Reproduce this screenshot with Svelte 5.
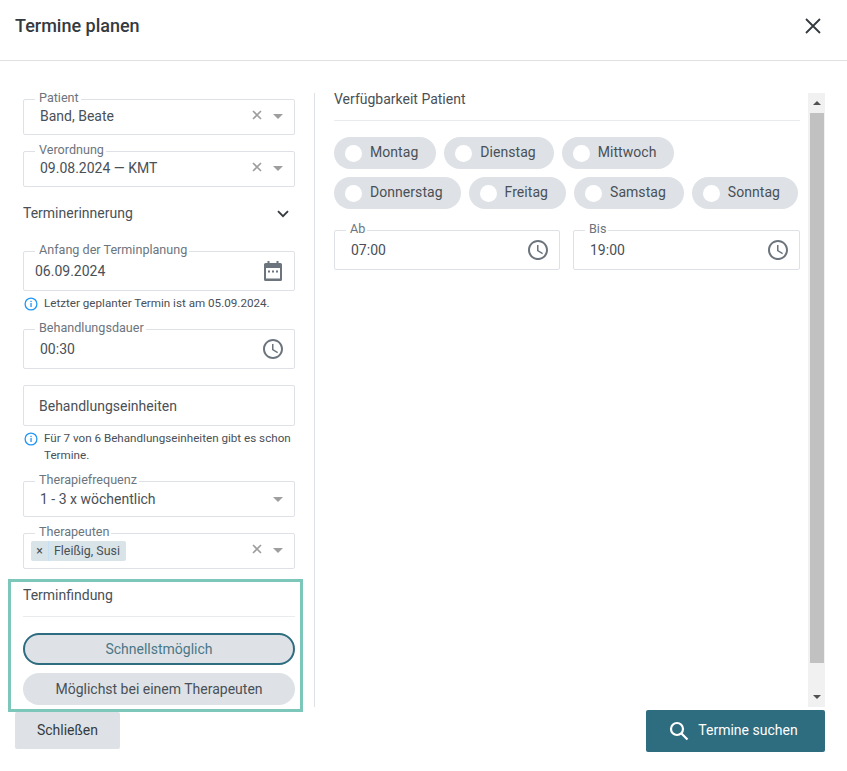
<script>
  const clock =
    "M11.99 2C6.47 2 2 6.48 2 12s4.47 10 9.99 10C17.52 22 22 17.52 22 12S17.52 2 11.99 2zM12 20c-4.42 0-8-3.58-8-8s3.58-8 8-8 8 3.58 8 8-3.58 8-8 8zm.5-13H11v6l5.25 3.15.75-1.23-4.5-2.67z";
  const days1 = ["Montag", "Dienstag", "Mittwoch"];
  const days2 = ["Donnerstag", "Freitag", "Samstag", "Sonntag"];
</script>

{#snippet clockIcon()}
  <svg class="ico" viewBox="0 0 24 24" width="24" height="24"><path d={clock} /></svg>
{/snippet}

{#snippet selectTools(clearable)}
  <span class="tools">
    {#if clearable}
      <svg class="clear" viewBox="0 0 10 10" width="10" height="10"><path d="M1 1l8 8M9 1l-8 8" /></svg>
    {/if}
    <span class="caret"></span>
  </span>
{/snippet}

{#snippet chip(day)}
  <button class="day"><span class="knob"></span>{day}</button>
{/snippet}

{#snippet info(text)}
  <div class="info">
    <svg viewBox="0 0 14 14" width="14" height="14">
      <circle cx="7" cy="7" r="5.9" fill="none" stroke="#2196f3" stroke-width="1.3" />
      <rect x="6.4" y="6" width="1.3" height="4" fill="#2196f3" />
      <rect x="6.4" y="3.8" width="1.3" height="1.3" fill="#2196f3" />
    </svg>
    <span>{text}</span>
  </div>
{/snippet}

<div class="dialog">
  <header>
    <h2>Termine planen</h2>
    <button class="close" aria-label="Schließen">
      <svg viewBox="0 0 16 16" width="16" height="16"><path d="M1 1l14 14M15 1L1 15" /></svg>
    </button>
  </header>

  <div class="body">
    <aside class="left">
      <div class="field sel">
        <label>Patient</label>
        <span class="val">Band, Beate</span>
        {@render selectTools(true)}
      </div>
      <div class="field sel gap">
        <label>Verordnung</label>
        <span class="val">09.08.2024 — KMT</span>
        {@render selectTools(true)}
      </div>
      <div class="reminder">
        <span>Terminerinnerung</span>
        <svg viewBox="0 0 12 8" width="12" height="8"><path d="M1 1.2l5 5 5-5" /></svg>
      </div>
      <div class="field tall">
        <label>Anfang der Terminplanung</label>
        <span class="val date">06.09.2024</span>
        <svg class="ico" viewBox="0 0 24 24" width="24" height="24">
          <path d="M6.5 2h2v2h7V2h2v2h2A1.500 1.500 0 0 1 21 5.500v15a1.500 1.500 0 0 1-1.500 1.500h-15A1.500 1.500 0 0 1 3 20.500v-15A1.500 1.500 0 0 1 4.500 4h2z" />
          <path fill="#fff" d="M5 9h14v10.500H5z" />
          <path d="M7 11.500h2v2H7zM11 11.500h2v2h-2zM15 11.500h2v2h-2z" />
        </svg>
      </div>
      {@render info("Letzter geplanter Termin ist am 05.09.2024.")}
      <div class="field tall dauer">
        <label>Behandlungsdauer</label>
        <span class="val">00:30</span>
        {@render clockIcon()}
      </div>
      <div class="field tall plain">
        <span class="val">Behandlungseinheiten</span>
      </div>
      {@render info("Für 7 von 6 Behandlungseinheiten gibt es schon Termine.")}
      <div class="field sel freq">
        <label>Therapiefrequenz</label>
        <span class="val">1 - 3 x wöchentlich</span>
        {@render selectTools(false)}
      </div>
      <div class="field sel gap multi">
        <label>Therapeuten</label>
        <span class="tag"><span class="x">×</span><span class="name">Fleißig, Susi</span></span>
        {@render selectTools(true)}
      </div>

      <section class="finder">
        <h4>Terminfindung</h4>
        <button class="pill active">Schnellstmöglich</button>
        <button class="pill">Möglichst bei einem Therapeuten</button>
      </section>
    </aside>

    <main class="right">
      <h4>Verfügbarkeit Patient</h4>
      <div class="days">
        {#each days1 as d}{@render chip(d)}{/each}
      </div>
      <div class="days">
        {#each days2 as d}{@render chip(d)}{/each}
      </div>
      <div class="times">
        <div class="field tall">
          <label>Ab</label>
          <span class="val">07:00</span>
          {@render clockIcon()}
        </div>
        <div class="field tall">
          <label>Bis</label>
          <span class="val">19:00</span>
          {@render clockIcon()}
        </div>
      </div>
    </main>

    <div class="scrollbar">
      <span class="arrow up"></span>
      <div class="track"><div class="thumb"></div></div>
      <span class="arrow down"></span>
    </div>
  </div>

  <footer>
    <button class="btn secondary">Schließen</button>
    <button class="btn primary">
      <svg viewBox="0 0 20 20" width="20" height="20"><circle cx="8" cy="8" r="6" /><path d="M12.500 12.500l6 6" /></svg>
      Termine suchen
    </button>
  </footer>
</div>

<style>
  :global(body) {
    margin: 0;
    background: #fff;
    font-family: Roboto, "Liberation Sans", sans-serif;
    font-size: 14px;
    color: #495057;
  }
  .dialog {
    width: 847px;
    height: 771px;
    overflow: hidden;
  }
  header {
    height: 61px;
    box-sizing: border-box;
    border-bottom: 1px solid #e0e0e0;
    padding: 0 26px 8px 15px;
    display: flex;
    align-items: center;
    justify-content: space-between;
  }
  h2 {
    margin: 0 0 2px;
    font-size: 18px;
    font-weight: 500;
    color: #343a40;
  }
  .close {
    border: 0;
    background: none;
    padding: 0;
    display: flex;
  }
  .close path {
    stroke: #343a40;
    stroke-width: 1.8;
    fill: none;
  }
  .body {
    display: flex;
    height: 614px;
    margin-top: 32px;
    padding-left: 23px;
    padding-right: 22px;
  }
  .left {
    width: 272px;
    flex: none;
    padding-top: 6px;
    padding-right: 19px;
    border-right: 1px solid #dee2e6;
  }
  .right {
    width: 466px;
    flex: none;
    margin-left: 19px;
    margin-right: 8px;
    margin-top: -4px;
  }
  .field {
    position: relative;
    box-sizing: border-box;
    border: 1px solid #dee2e6;
    border-radius: 2px;
    display: flex;
    align-items: center;
    justify-content: space-between;
    padding: 0 9px 0 16px;
    background: #fff;
  }
  .sel {
    height: 36px;
    padding-right: 11px;
    padding-bottom: 3px;
  }
  .tall {
    height: 40px;
  }
  .gap {
    margin-top: 16px;
  }
  .freq {
    margin-top: 17px;
    padding-bottom: 1px;
  }
  .dauer {
    margin-top: 17px;
  }
  .plain {
    margin-top: 16px;
    height: 41px;
    padding-left: 15px;
  }
  label {
    position: absolute;
    left: 11px;
    top: -10px;
    padding: 0 2px 0 4px;
    font-size: 12.6px;
    line-height: 15px;
    color: #6c757d;
    background: #fff;
  }
  .val {
    line-height: 20px;
  }
  .date {
    margin-left: -5px;
  }
  .ico {
    fill: #6c757d;
    flex: none;
  }
  .tools {
    display: flex;
    align-items: center;
    gap: 11px;
    margin-left: auto;
  }
  .clear {
    margin-top: -2px;
  }
  .clear path {
    stroke: #9e9e9e;
    stroke-width: 1.6;
    fill: none;
  }
  .caret {
    width: 0;
    height: 0;
    border-left: 5px solid transparent;
    border-right: 5px solid transparent;
    border-top: 5px solid #9e9e9e;
    margin-top: 2px;
  }
  .reminder {
    height: 24px;
    margin-top: 15px;
    margin-bottom: 25px;
    display: flex;
    align-items: center;
    justify-content: space-between;
    padding-right: 6px;
  }
  .reminder span {
    margin-bottom: 2px;
  }
  .reminder path {
    stroke: #343a40;
    stroke-width: 1.8;
    fill: none;
  }
  .info {
    display: flex;
    gap: 6px;
    margin-top: 4px;
    font-size: 11.65px;
    line-height: 17px;
    padding-left: 1px;
  }
  .info svg {
    flex: none;
    margin-top: 2px;
  }
  .multi {
    padding-left: 7px;
  }
  .tag {
    display: flex;
    align-items: stretch;
    height: 20px;
    line-height: 20px;
    font-size: 12.4px;
    background: #d9e4e8;
    border-radius: 2px;
    margin-top: 3px;
  }
  .x {
    width: 17px;
    text-align: center;
    border-right: 1px solid #c5dff5;
  }
  .name {
    padding: 0 6px 0 5px;
  }
  .finder {
    margin: 10px -8px 0 -15px;
    height: 133px;
    box-sizing: border-box;
    border: 3px solid #7cc7b9;
    padding: 3px 5px 0 12px;
  }
  .finder h4 {
    padding-bottom: 11px;
    margin-bottom: 16px;
  }
  h4 {
    margin: 0;
    font-weight: 400;
    font-size: 14px;
    line-height: 20px;
    border-bottom: 1px solid #e9ecef;
  }
  .right h4 {
    padding-bottom: 11px;
    margin-bottom: 16px;
  }
  .pill {
    display: block;
    width: 100%;
    height: 32px;
    box-sizing: border-box;
    border: 0;
    border-radius: 16px;
    background: #dee2e6;
    color: #495057;
    font: inherit;
    padding: 0;
  }
  .pill + .pill {
    margin-top: 8px;
  }
  .active {
    border: 2px solid #2e6c80;
    color: #4a7786;
  }
  .days {
    display: flex;
    gap: 8px;
    margin-bottom: 8px;
  }
  .day {
    display: flex;
    align-items: center;
    height: 32px;
    box-sizing: border-box;
    border: 0;
    border-radius: 16px;
    background: #dee2e6;
    color: #495057;
    font: inherit;
    letter-spacing: 0.05px;
    padding: 0 18px 2px 11px;
    gap: 8px;
  }
  .knob {
    width: 17px;
    height: 17px;
    border-radius: 50%;
    background: #fff;
    margin-top: 2px;
  }
  .times {
    display: flex;
    gap: 13px;
    margin-top: 21px;
  }
  .times .field {
    flex: 1;
  }
  .times .field:first-child {
    flex: none;
    width: 226px;
  }
  .scrollbar {
    width: 17px;
    flex: none;
    background: #f1f1f1;
    display: flex;
    flex-direction: column;
    align-items: center;
  }
  .track {
    flex: 1;
    width: 100%;
    padding: 0 1px 0 2px;
    box-sizing: border-box;
  }
  .thumb {
    height: 550px;
    background: #c1c1c1;
  }
  .arrow {
    height: 20px;
    display: flex;
    align-items: center;
  }
  .arrow::before {
    content: "";
    border-left: 4px solid transparent;
    border-right: 4px solid transparent;
  }
  .up::before {
    border-bottom: 4px solid #505050;
  }
  .down::before {
    border-top: 4px solid #505050;
  }
  footer {
    display: flex;
    justify-content: space-between;
    align-items: flex-start;
    padding: 3px 22px 0 15px;
  }
  .btn {
    border: 0;
    border-radius: 2px;
    font: inherit;
    display: flex;
    align-items: center;
    justify-content: center;
  }
  .secondary {
    width: 105px;
    height: 37px;
    margin-top: 2px;
    background: #dee2e6;
    color: #343a40;
    padding: 0 0 2px;
  }
  .primary {
    width: 179px;
    height: 42px;
    background: #2e6c80;
    color: #fff;
    gap: 9px;
    padding: 0 4px 2px 0;
  }
  .primary svg {
    fill: none;
    stroke: #fff;
    stroke-width: 2.2;
    margin-top: 2px;
  }
</style>
